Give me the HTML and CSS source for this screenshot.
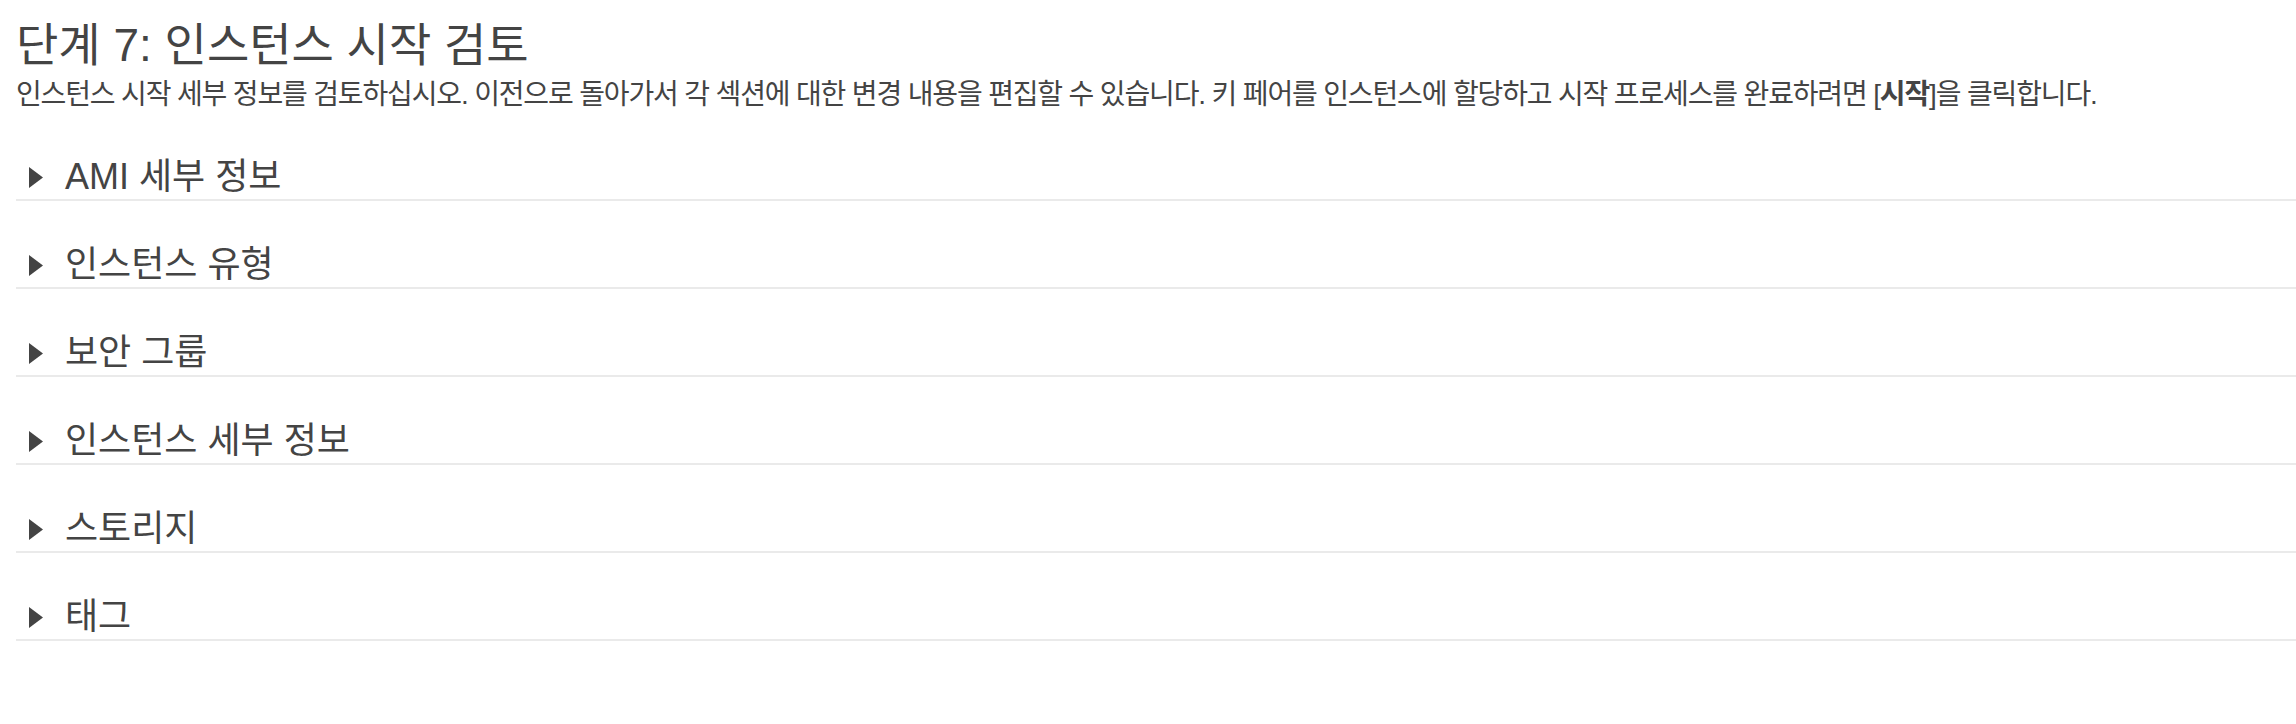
FILE: index.html
```html
<!DOCTYPE html>
<html lang="ko">
<head>
<meta charset="utf-8">
<title>단계 7: 인스턴스 시작 검토</title>
<link rel="stylesheet" href="styles.css">
</head>
<body>
<div class="page">
  <h1 class="title">단계 7: 인스턴스 시작 검토</h1>
  <p class="desc">인스턴스 시작 세부 정보를 검토하십시오. 이전으로 돌아가서 각 섹션에 대한 변경 내용을 편집할 수 있습니다. 키 페어를 인스턴스에 할당하고 시작 프로세스를 완료하려면 [<b>시작</b>]을 클릭합니다.</p>
  <div class="sections">
    <div class="section"><span class="caret"><svg width="14" height="21" viewBox="0 0 14 21"><polygon points="0,0 14,10.5 0,21" fill="#444"/></svg></span><span class="label">AMI 세부 정보</span></div>
    <div class="section"><span class="caret"><svg width="14" height="21" viewBox="0 0 14 21"><polygon points="0,0 14,10.5 0,21" fill="#444"/></svg></span><span class="label">인스턴스 유형</span></div>
    <div class="section"><span class="caret"><svg width="14" height="21" viewBox="0 0 14 21"><polygon points="0,0 14,10.5 0,21" fill="#444"/></svg></span><span class="label">보안 그룹</span></div>
    <div class="section"><span class="caret"><svg width="14" height="21" viewBox="0 0 14 21"><polygon points="0,0 14,10.5 0,21" fill="#444"/></svg></span><span class="label">인스턴스 세부 정보</span></div>
    <div class="section"><span class="caret"><svg width="14" height="21" viewBox="0 0 14 21"><polygon points="0,0 14,10.5 0,21" fill="#444"/></svg></span><span class="label">스토리지</span></div>
    <div class="section"><span class="caret"><svg width="14" height="21" viewBox="0 0 14 21"><polygon points="0,0 14,10.5 0,21" fill="#444"/></svg></span><span class="label">태그</span></div>
  </div>
</div>
</body>
</html>
```

FILE: styles.css
```css
html, body {
  margin: 0;
  padding: 0;
  background: #ffffff;
}
body {
  font-family: "Liberation Sans", "Noto Sans CJK KR", sans-serif;
  color: #444444;
}
.page {
  padding: 17px 0 0 16px;
}
.title {
  margin: 0;
  font-size: 46px;
  font-weight: normal;
  line-height: 56px;
}
.desc {
  margin: 2px 0 0;
  font-size: 28px;
  line-height: 40px;
  letter-spacing: -1.15px;
}
.desc b {
  font-weight: bold;
}
.sections {
  display: flex;
  flex-direction: column;
  margin-top: 40px;
}
.section {
  display: flex;
  align-items: center;
  height: 44px;
  border-bottom: 2px solid #eaeaea;
  margin-bottom: 42px;
  padding-left: 13px;
}
.caret {
  display: flex;
  width: 36px;
  flex: none;
}
.label {
  font-size: 36px;
  line-height: 44px;
}
```
